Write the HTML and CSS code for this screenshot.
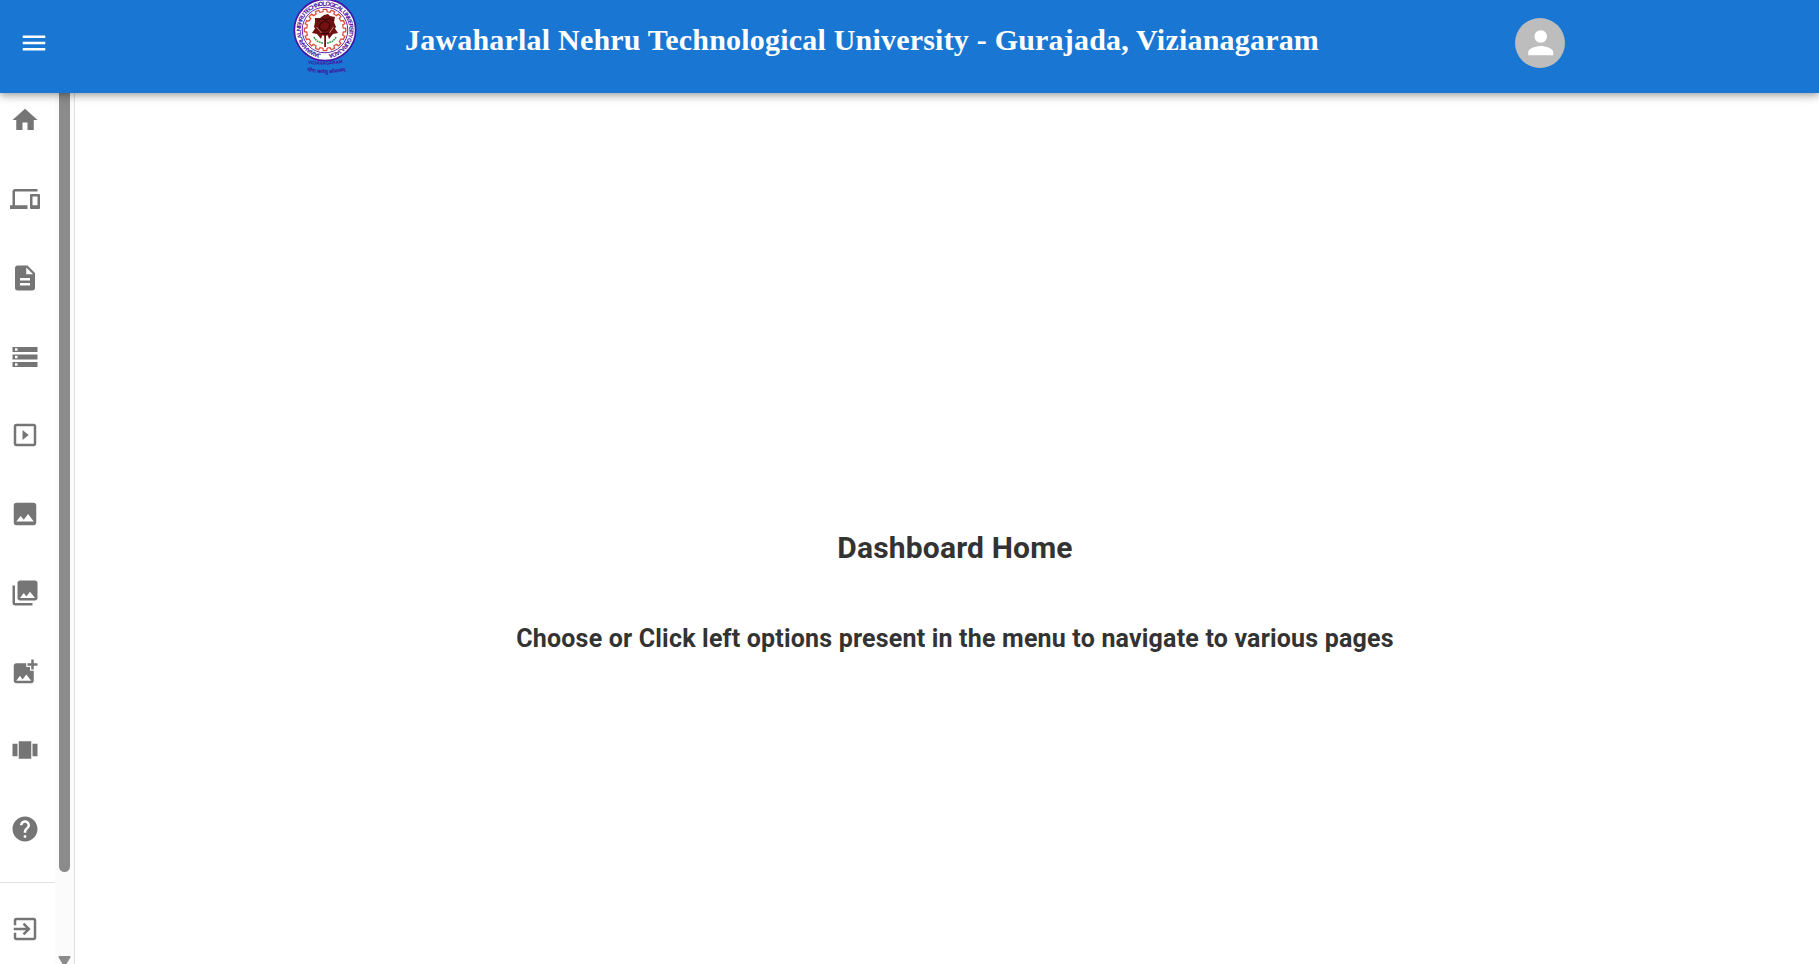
FILE: index.html
```html
<!DOCTYPE html>
<html lang="en">
<head>
<meta charset="utf-8">
<title>Dashboard Home</title>
<link rel="stylesheet" href="styles.css">
</head>
<body>
<header class="app-bar">
  <button class="menu-button" aria-label="Open menu"><svg class="icon" viewBox="0 0 24 24"><path d="M3 18h18v-2H3v2zm0-5h18v-2H3v2zm0-7v2h18V6H3z"/></svg></button>
  <svg class="crest" viewBox="0 0 70 84">
    <defs>
      <path id="ring" d="M35 57.300a24.300 24.300 0 1 1 .01 0"/>
      <path id="place" d="M18 66.500Q35 69.500 54 65.500"/>
      <path id="motto" d="M17 73.800Q35 79 56 73.800"/>
      <path id="tooth" d="M-3.570-17.950L-2.100-18.200L-1.700-20.700H1.700L2.100-18.200L3.570-17.950"/>
      <g id="teeth"><use href="#tooth"/><use href="#tooth" transform="rotate(22.500)"/><use href="#tooth" transform="rotate(45)"/><use href="#tooth" transform="rotate(67.500)"/></g>
    </defs>
    <circle cx="35" cy="33" r="30.700" fill="#fff" stroke="#4315a8" stroke-width="1.700"/>
    <circle cx="35" cy="33" r="22.800" fill="none" stroke="#5b2bb5" stroke-width="1"/>
    <text class="crest-ring"><textPath href="#ring" startOffset="4" textLength="145">JAWAHARLAL NEHRU TECHNOLOGICAL UNIVERSITY GURAJADA</textPath></text>
    <g transform="translate(35 33)" fill="none" stroke="#dc4a38" stroke-width="1.300">
      <use href="#teeth"/><use href="#teeth" transform="rotate(90)"/><use href="#teeth" transform="rotate(180)"/><use href="#teeth" transform="rotate(270)"/>
    </g>
    <g fill="#70100f">
      <path d="M34 18l4-1 2 2 5 1-1 5 2 5-3 4-4 4-4 1-4-1-4-4-3-4 1-5 0-4 5 0z"/>
      <path d="M26 30l-4 6 5 1 4 5 2-6zM44 30l4 6-5 1-4 5-2-6z"/>
      <path d="M34.200 38h1.800v12h-1.800z"/>
    </g>
    <path d="M28 24q3-4 7-1 5-3 8 1M29 30q1-5 6-6 5 1 5 5-1 4-5 5-4 0-6-4M31 36q4 2 8 0" fill="none" stroke="#2a0507" stroke-width="1"/>
    <path d="M26.500 30l5 6M43.500 30l-4 6" stroke="#e8cfcf" stroke-width=".6"/>
    <path d="M24 40q2 5 9 6M46 40q-2 5-9 6" fill="none" stroke="#2b9938" stroke-width="1.500" stroke-dasharray="1.800 .6"/>
    <text class="crest-place"><textPath href="#place">VIZIANAGARAM</textPath></text>
    <text class="crest-motto"><textPath href="#motto">योगः कर्मसु कौशलम्</textPath></text>
  </svg>
  <h1 class="brand">Jawaharlal Nehru Technological University - Gurajada, Vizianagaram</h1>
  <div class="avatar"><svg class="avatar-icon" viewBox="0 0 24 24"><path d="M12 12c2.210 0 4-1.790 4-4s-1.790-4-4-4-4 1.790-4 4 1.790 4 4 4zm0 2c-2.670 0-8 1.340-8 4v2h16v-2c0-2.660-5.330-4-8-4z"/></svg></div>
</header>
<div class="layout">
  <aside class="drawer">
    <nav class="nav">
      <a class="nav-item"><svg class="icon" viewBox="0 0 24 24"><path d="M10 20v-6h4v6h5v-8h3L12 3 2 12h3v8z"/></svg></a>
      <a class="nav-item"><svg class="icon" viewBox="0 0 24 24"><path d="M4 6h18V4H4c-1.100 0-2 .9-2 2v11H0v3h14v-3H4V6zm19 2h-6c-.55 0-1 .45-1 1v10c0 .55.45 1 1 1h6c.55 0 1-.45 1-1V9c0-.55-.45-1-1-1zm-1 9h-4v-7h4v7z"/></svg></a>
      <a class="nav-item"><svg class="icon" viewBox="0 0 24 24"><path d="M14 2H6c-1.100 0-1.990.9-1.990 2L4 20c0 1.100.89 2 1.990 2H18c1.100 0 2-.9 2-2V8l-6-6zm2 16H8v-2h8v2zm0-4H8v-2h8v2zm-3-5V3.500L18.500 9H13z"/></svg></a>
      <a class="nav-item"><svg class="icon" viewBox="0 0 24 24"><path d="M2 20h20v-4H2v4zm2-3h2v2H4v-2zM2 4v4h20V4H2zm4 3H4V5h2v2zm-4 7h20v-4H2v4zm2-3h2v2H4v-2z"/></svg></a>
      <a class="nav-item"><svg class="icon" viewBox="0 0 24 24"><path d="M10 8v8l5-4-5-4zm9-5H5c-1.100 0-2 .9-2 2v14c0 1.100.9 2 2 2h14c1.100 0 2-.9 2-2V5c0-1.100-.9-2-2-2zm0 16H5V5h14v14z"/></svg></a>
      <a class="nav-item"><svg class="icon" viewBox="0 0 24 24"><path d="M21 19V5c0-1.100-.9-2-2-2H5c-1.100 0-2 .9-2 2v14c0 1.100.9 2 2 2h14c1.100 0 2-.9 2-2zM8.500 13.500l2.500 3.010L14.500 12l4.500 6H5l3.500-4.500z"/></svg></a>
      <a class="nav-item"><svg class="icon" viewBox="0 0 24 24"><path d="M22 16V4c0-1.100-.9-2-2-2H8c-1.100 0-2 .9-2 2v12c0 1.100.9 2 2 2h12c1.100 0 2-.9 2-2zm-11-4l2.030 2.710L16 11l4 5H8l3-4zM2 6v14c0 1.100.9 2 2 2h14v-2H4V6H2z"/></svg></a>
      <a class="nav-item"><svg class="icon" viewBox="0 0 24 24"><path d="M19 7v2.990s-1.990.01-2 0V7h-3s.01-1.990 0-2h3V2h2v3h3v2h-3zm-3 4V8h-3V5H5c-1.100 0-2 .9-2 2v12c0 1.100.9 2 2 2h12c1.100 0 2-.9 2-2v-8h-3zM5 19l3-4 2 3 3-4 4 5H5z"/></svg></a>
      <a class="nav-item"><svg class="icon" viewBox="0 0 24 24"><path d="M7 19h10V5H7v14zM2 17h4V7H2v10zM18 7v10h4V7h-4z"/></svg></a>
      <a class="nav-item"><svg class="icon" viewBox="0 0 24 24"><path d="M12 2C6.480 2 2 6.480 2 12s4.480 10 10 10 10-4.480 10-10S17.520 2 12 2zm1 17h-2v-2h2v2zm2.070-7.750l-.9.920C13.450 12.900 13 13.500 13 15h-2v-.5c0-1.100.45-2.100 1.170-2.830l1.240-1.260c.37-.36.59-.86.59-1.410 0-1.100-.9-2-2-2s-2 .9-2 2H8c0-2.210 1.790-4 4-4s4 1.790 4 4c0 .88-.36 1.680-.93 2.250z"/></svg></a>
      <hr class="divider">
      <a class="nav-item"><svg class="icon" viewBox="0 0 24 24"><path d="M10.090 15.590L11.500 17l5-5-5-5-1.410 1.410L12.670 11H3v2h9.670l-2.580 2.590zM19 3H5c-1.110 0-2 .9-2 2v4h2V5h14v14H5v-4H3v4c0 1.100.89 2 2 2h14c1.100 0 2-.9 2-2V5c0-1.100-.9-2-2-2z"/></svg></a>
    </nav>
    <div class="scroll-track">
      <div class="scroll-thumb"></div>
      <svg class="scroll-arrow" viewBox="0 0 13 8"><path d="M1.500 0h10q1.500.2.900 1.500L8.500 8h-4L.6 1.500Q0 .2 1.500 0z"/></svg>
    </div>
  </aside>
  <main class="content">
    <h2 class="heading">Dashboard Home</h2>
    <h3 class="hint">Choose or Click left options present in the menu to navigate to various pages</h3>
  </main>
</div>
</body>
</html>
```
FILE: styles.css
```css
* { box-sizing: border-box; }
body {
  margin: 0;
  height: 964px;
  overflow: hidden;
  background: #fff;
  color: #333;
  font-family: Roboto, Arial, sans-serif;
}
.icon { display: block; width: 30px; height: 30px; fill: currentColor; }
.app-bar {
  position: relative;
  z-index: 1;
  display: flex;
  align-items: flex-start;
  height: 93px;
  background: #1976d2;
  color: #fff;
  box-shadow: 0 2.500px 5px -1.250px rgba(0,0,0,.2), 0 5px 6.250px rgba(0,0,0,.14), 0 1.250px 12.500px rgba(0,0,0,.12);
}
.menu-button {
  margin: 28px 0 0 19px;
  padding: 0;
  border: 0;
  background: none;
  color: inherit;
}
.crest { width: 70px; height: 84px; margin: -3px 0 0 240.500px; }
.crest text { font-family: "Liberation Sans", Arial, sans-serif; font-weight: 700; fill: #42109c; }
.crest .crest-ring { font-size: 6px; }
.crest .crest-place { font-size: 4.500px; }
.crest .crest-motto { font-family: "Noto Sans", "Noto Sans Devanagari", sans-serif; font-size: 5px; }
.brand {
  width: 918px;
  margin: 22px 0 0 45.500px;
  font: 700 30px/36px "Liberation Serif", "Times New Roman", serif;
  letter-spacing: .2px;
  white-space: nowrap;
}
.avatar {
  display: flex;
  align-items: center;
  justify-content: center;
  width: 50px;
  height: 50px;
  margin: 18px 0 0 192px;
  border-radius: 50%;
  background: #bdbdbd;
}
.avatar-icon { width: 37.500px; height: 37.500px; margin-left: 1px; fill: #fff; }
.layout { display: flex; height: 871px; }
.drawer { display: flex; width: 75px; border-right: 1px solid #e0e0e0; }
.nav { width: 55px; padding-top: 12.250px; color: #757575; }
.nav-item { display: block; height: 78.750px; padding-left: 10px; }
.divider { height: 1px; margin: -11px 0 31px; border: 0; background: #e0e0e0; }
.scroll-track {
  display: flex;
  flex-direction: column;
  justify-content: space-between;
  width: 19px;
  padding-left: 4px;
  background: #fbfbfb;
}
.scroll-thumb { width: 11px; height: 779px; border-radius: 0 0 6px 6px; background: #8b8b8b; }
.scroll-arrow { width: 13px; height: 8px; margin-left: -1px; fill: #8b8b8b; }
.content { flex: 1; padding: 437px 0 0 16px; text-align: center; }
.heading { margin: 0; font-size: 30px; line-height: 36px; font-weight: 700; letter-spacing: .17px; }
.hint { margin: 57px 0 0; font-size: 25px; line-height: 32px; font-weight: 700; letter-spacing: .188px; }
```
